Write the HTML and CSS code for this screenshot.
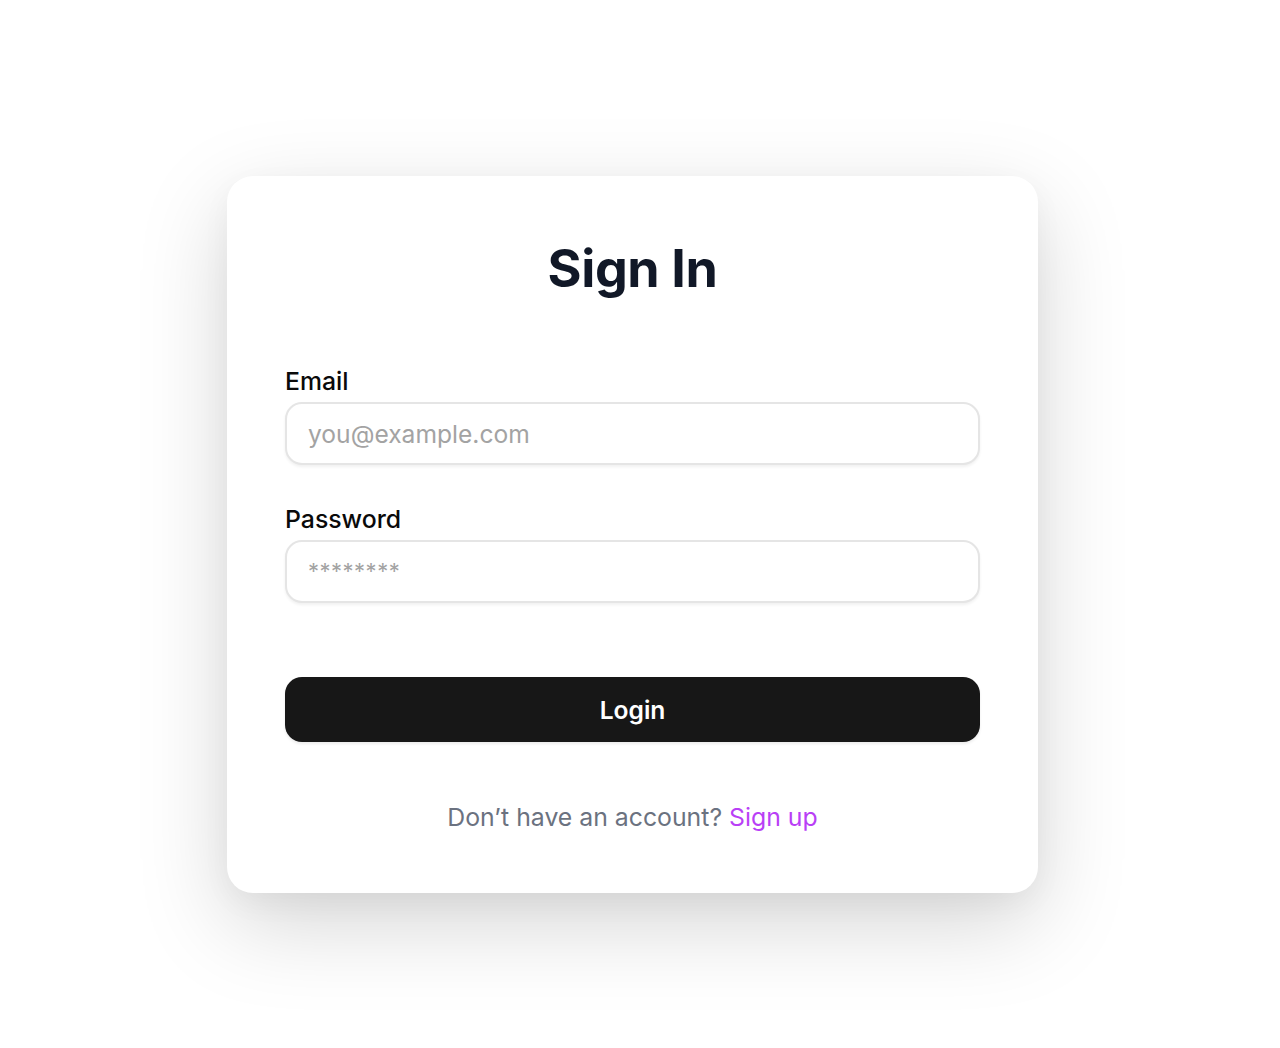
FILE: index.html
```html
<!DOCTYPE html>
<html lang="en">
<head>
<meta charset="utf-8">
<title>Sign In</title>
<link rel="stylesheet" href="styles.css">
</head>
<body>
<main class="page">
  <form class="card">
    <h1 class="title">Sign In</h1>
    <div class="field">
      <label class="label" for="email">Email</label>
      <input class="input" id="email" type="email" placeholder="you@example.com">
    </div>
    <div class="field field-second">
      <label class="label" for="password">Password</label>
      <input class="input input-pass" id="password" type="password" placeholder="********">
    </div>
    <button class="btn" type="button">Login</button>
    <p class="footer">Don’t have an account? <a class="link" href="#">Sign up</a></p>
  </form>
</main>
</body>
</html>
```
FILE: styles.css
```css
html, body {
  margin: 0;
  padding: 0;
  background: #ffffff;
}
body {
  font-family: Inter, "Noto Sans", "Liberation Sans", sans-serif;
  -webkit-font-smoothing: antialiased;
}
.page {
  display: flex;
  justify-content: center;
  align-items: flex-start;
  padding: 176px 15px 0 0;
  min-height: 1048px;
  box-sizing: border-box;
}
.card {
  width: 811px;
  box-sizing: border-box;
  padding: 61px 58px 60px;
  background: #ffffff;
  border-radius: 26px;
  box-shadow: 0 30px 90px rgba(0, 0, 0, 0.17), 0 10px 30px rgba(0, 0, 0, 0.04);
  display: flex;
  flex-direction: column;
}
.title {
  margin: 0;
  text-align: center;
  font-size: 52px;
  line-height: 63px;
  font-weight: 700;
  color: #111827;
  letter-spacing: -0.4px;
}
.field {
  display: flex;
  flex-direction: column;
  gap: 5px;
  margin-top: 65px;
}
.field-second {
  margin-top: 38px;
}
.label {
  font-size: 24.8px;
  line-height: 32px;
  font-weight: 500;
  color: #0a0a0a;
}
.input {
  height: 63px;
  box-sizing: border-box;
  border: 2px solid #e5e5e5;
  border-radius: 17px;
  padding: 0 21px;
  font-family: inherit;
  font-size: 24.6px;
  color: #111;
  background: #fff;
  box-shadow: 0 2px 3px rgba(0, 0, 0, 0.06);
  outline: none;
}
.input::placeholder {
  color: #a3a3a3;
}
.input-pass {
  padding-bottom: 3px;
}
.input-pass::placeholder {
  font-size: 22px;
  letter-spacing: 0.5px;
}
.btn {
  margin-top: 74px;
  height: 65px;
  border: none;
  border-radius: 17px;
  background: #171717;
  color: #ffffff;
  font-family: inherit;
  font-size: 24.6px;
  font-weight: 600;
  cursor: pointer;
  box-shadow: 0 2px 3px rgba(0, 0, 0, 0.08);
}
.footer {
  margin: 59px 0 0;
  text-align: center;
  font-size: 24.8px;
  line-height: 32px;
  color: #6b7280;
}
.link {
  color: #b93ff6;
  text-decoration: none;
}
```
